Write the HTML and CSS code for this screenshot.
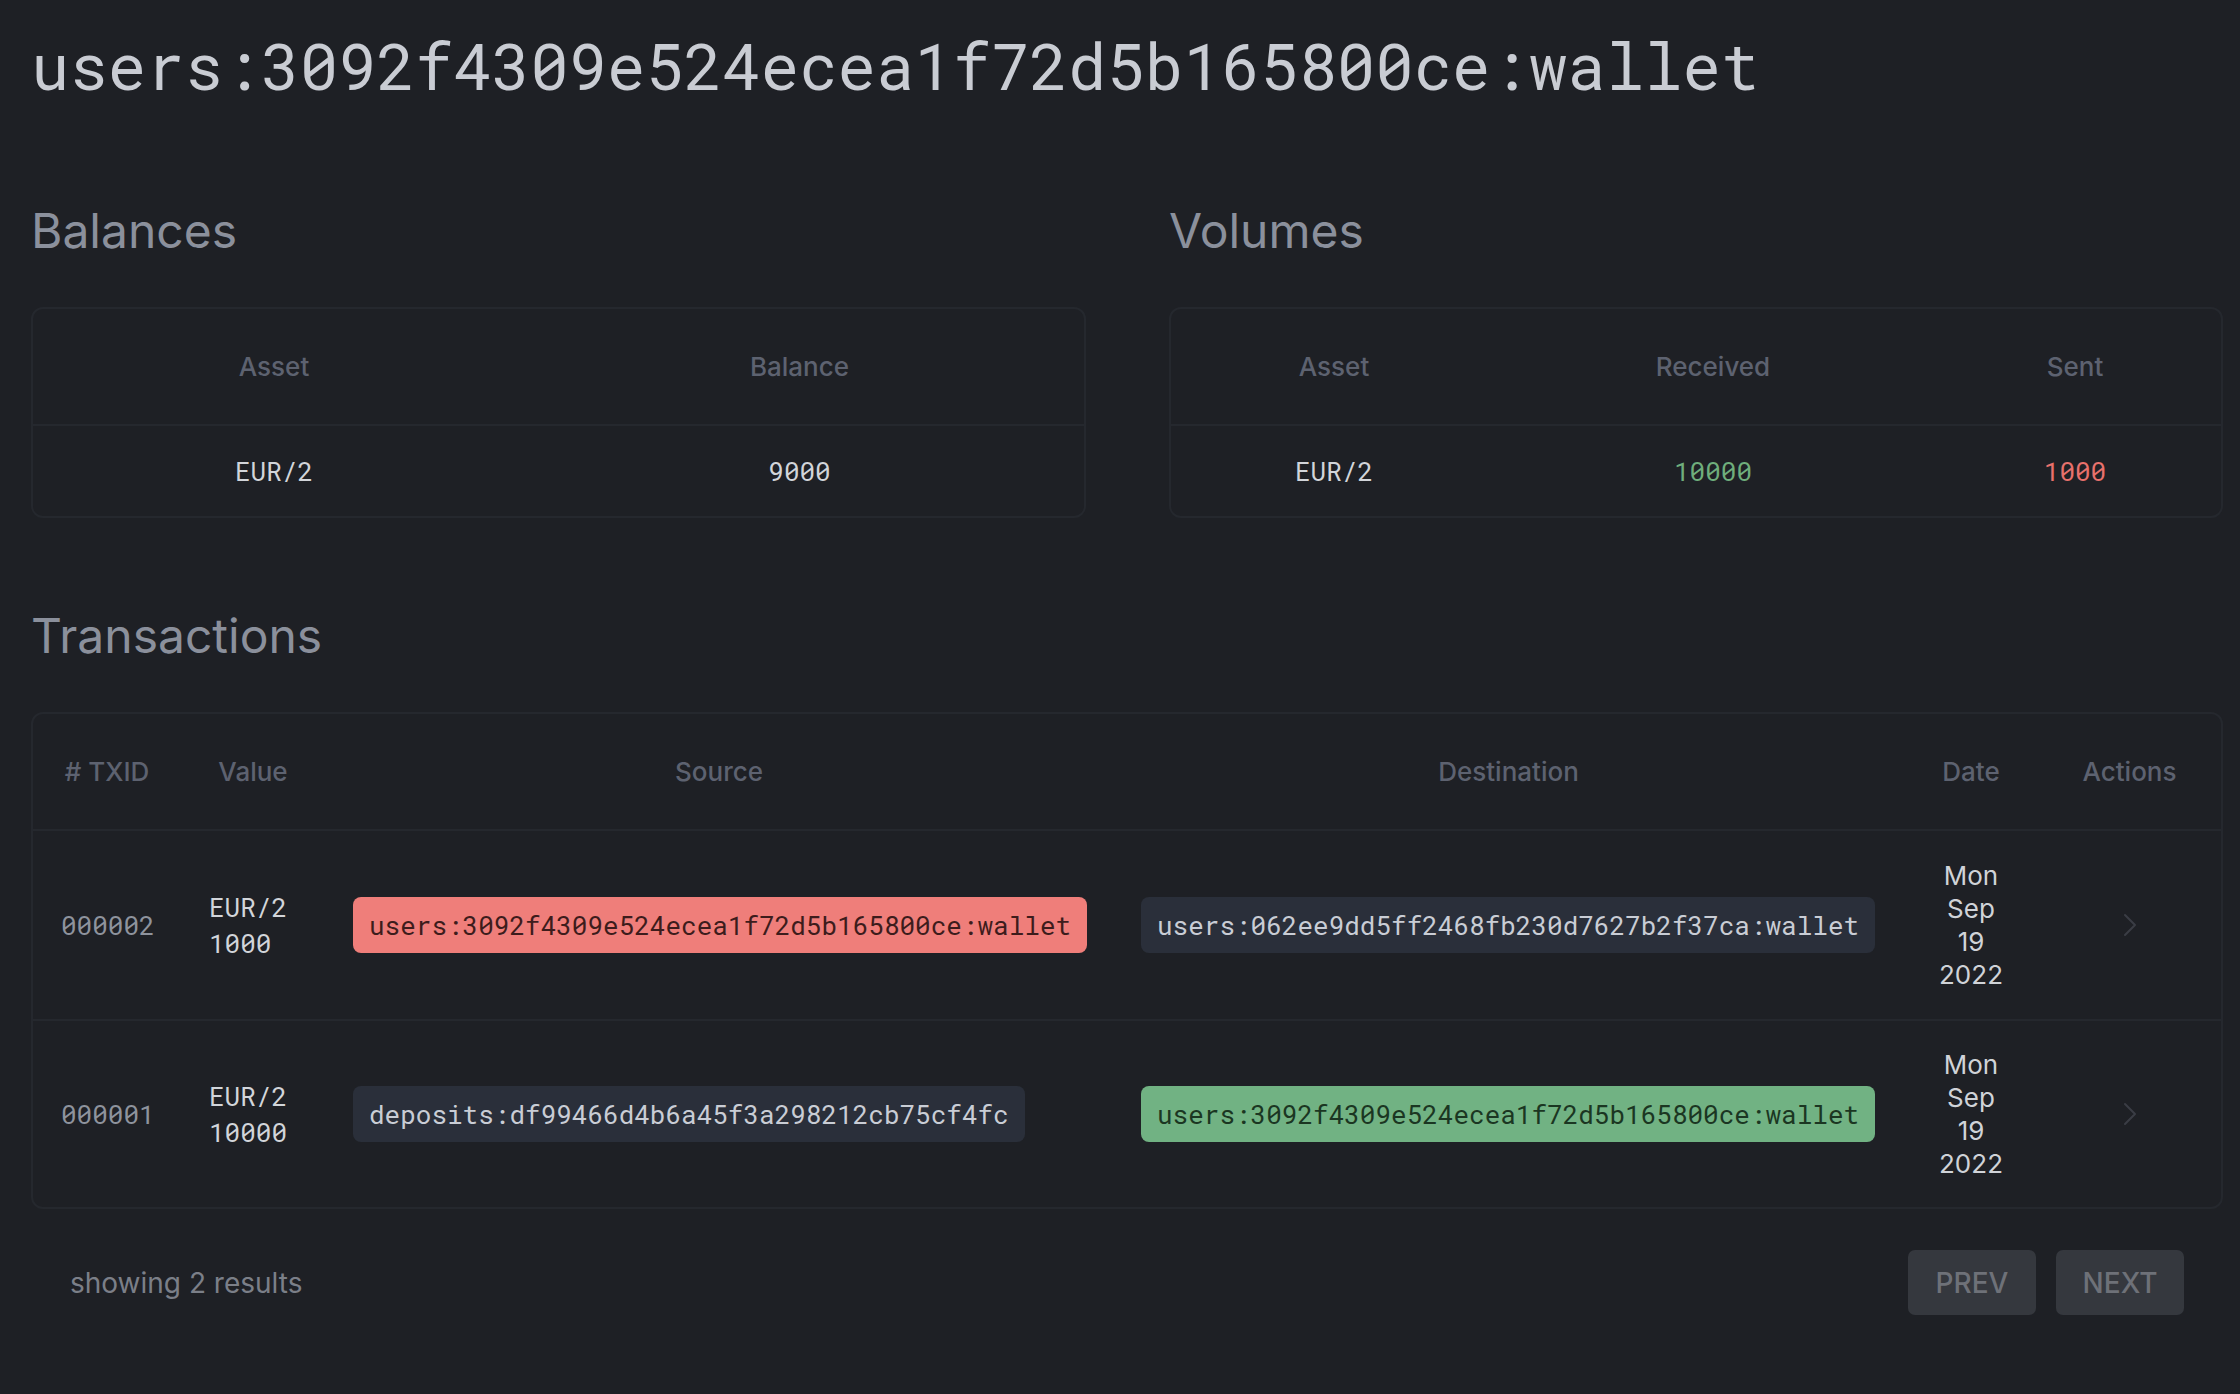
FILE: index.html
```html
<!DOCTYPE html>
<html lang="en">
<head>
<meta charset="utf-8">
<title>users:3092f4309e524ecea1f72d5b165800ce:wallet</title>
<link rel="stylesheet" href="styles.css">
</head>
<body>
<div class="page">
  <h1 class="title">users:3092f4309e524ecea1f72d5b165800ce:wallet</h1>

  <div class="summary">
    <section class="block">
      <h2 class="heading">Balances</h2>
      <div class="card">
        <div class="row head bal-cols">
          <div class="th">Asset</div>
          <div class="th">Balance</div>
        </div>
        <div class="row body bal-cols">
          <div class="td mono light">EUR/2</div>
          <div class="td mono light">9000</div>
        </div>
      </div>
    </section>

    <section class="block">
      <h2 class="heading">Volumes</h2>
      <div class="card">
        <div class="row head vol-cols">
          <div class="th">Asset</div>
          <div class="th">Received</div>
          <div class="th">Sent</div>
        </div>
        <div class="row body vol-cols">
          <div class="td mono light">EUR/2</div>
          <div class="td mono green">10000</div>
          <div class="td mono red">1000</div>
        </div>
      </div>
    </section>
  </div>

  <section class="block tx-block">
    <h2 class="heading">Transactions</h2>
    <div class="card">
      <div class="row head tx-cols">
        <div class="th"># TXID</div>
        <div class="th">Value</div>
        <div class="th">Source</div>
        <div class="th">Destination</div>
        <div class="th">Date</div>
        <div class="th">Actions</div>
      </div>

      <div class="row tx-row tx-cols">
        <div class="cell mono txid">000002</div>
        <div class="cell mono light value"><span>EUR/2</span><span>1000</span></div>
        <div class="cell"><span class="pill pill-red">users:3092f4309e524ecea1f72d5b165800ce:wallet</span></div>
        <div class="cell"><span class="pill pill-gray">users:062ee9dd5ff2468fb230d7627b2f37ca:wallet</span></div>
        <div class="cell date"><span class="date-text">Mon Sep 19 2022</span></div>
        <div class="cell action">
          <svg class="chev" width="14" height="24" viewBox="0 0 14 24"><path d="M2 2 L12 12 L2 22" fill="none" stroke="currentColor" stroke-width="2" stroke-linecap="round" stroke-linejoin="round"/></svg>
        </div>
      </div>

      <div class="row tx-row tx-cols">
        <div class="cell mono txid">000001</div>
        <div class="cell mono light value"><span>EUR/2</span><span>10000</span></div>
        <div class="cell"><span class="pill pill-gray">deposits:df99466d4b6a45f3a298212cb75cf4fc</span></div>
        <div class="cell"><span class="pill pill-green">users:3092f4309e524ecea1f72d5b165800ce:wallet</span></div>
        <div class="cell date"><span class="date-text">Mon Sep 19 2022</span></div>
        <div class="cell action">
          <svg class="chev" width="14" height="24" viewBox="0 0 14 24"><path d="M2 2 L12 12 L2 22" fill="none" stroke="currentColor" stroke-width="2" stroke-linecap="round" stroke-linejoin="round"/></svg>
        </div>
      </div>
    </div>

    <div class="footer">
      <span class="results">showing 2 results</span>
      <div class="pager">
        <button class="btn" type="button">PREV</button>
        <button class="btn" type="button">NEXT</button>
      </div>
    </div>
  </section>
</div>
</body>
</html>
```

FILE: styles.css
```css
html, body {
  margin: 0;
  padding: 0;
  background: #1e2025;
}

body {
  font-family: Inter, "Noto Sans", sans-serif;
  color: #d0d3d8;
}

.page {
  padding: 27px 17px 40px 31px;
}

.mono {
  font-family: "Roboto Mono", "Liberation Mono", "DejaVu Sans Mono", monospace;
}

.title {
  margin: 0;
  font-family: "Roboto Mono", "Liberation Mono", "DejaVu Sans Mono", monospace;
  font-size: 64px;
  line-height: 76px;
  font-weight: 400;
  color: #c9ccd3;
}

.summary {
  margin-top: 99px;
  display: grid;
  grid-template-columns: 1055px 1fr;
  column-gap: 83px;
}

.heading {
  margin: 0 0 47px 0;
  font-family: Inter, "Noto Sans", sans-serif;
  font-size: 48px;
  line-height: 58px;
  font-weight: 400;
  color: #8b909c;
}

.tx-block {
  margin-top: 89px;
}

.card {
  border: 2px solid #25282e;
  border-radius: 12px;
}

.row {
  display: grid;
  align-items: center;
}

.row.head {
  height: 115px;
  border-bottom: 2px solid #25282e;
}

.row.body {
  height: 90px;
}

.bal-cols {
  grid-template-columns: 482px 1fr;
}

.vol-cols {
  grid-template-columns: 326px 432px 1fr;
}

.tx-cols {
  grid-template-columns: 148px 144px 788px 791px 134px 1fr;
}

.th {
  text-align: center;
  font-size: 26px;
  line-height: 36px;
  font-weight: 500;
  color: #5d6270;
}

.td {
  text-align: center;
  font-size: 26px;
  line-height: 36px;
}

.light { color: #d2d5da; }
.green { color: #6fae7c; }
.red { color: #e8716c; }

.tx-row {
  height: 188px;
  border-bottom: 2px solid #25282e;
}

.tx-row:last-child {
  height: 186px;
  border-bottom: none;
}

.cell {
  padding: 0 28px;
  font-size: 26px;
  line-height: 36px;
}

.txid {
  color: #8e939d;
}

.value {
  display: flex;
  flex-direction: column;
}

.pill {
  display: inline-block;
  font-family: "Roboto Mono", "Liberation Mono", "DejaVu Sans Mono", monospace;
  font-size: 26px;
  line-height: 40px;
  padding: 8px 16px;
  border-radius: 8px;
  white-space: nowrap;
}

.pill-red {
  background: #ef7e7a;
  color: #3d1c1c;
}

.pill-green {
  background: #71b283;
  color: #1b3622;
}

.pill-gray {
  background: #2a2f3a;
  color: #c9cdd5;
}

.date {
  text-align: center;
  line-height: 33px;
  color: #d0d3d8;
}

.date-text {
  display: inline-block;
  width: min-content;
}

.action {
  display: flex;
  justify-content: center;
  align-items: center;
  padding: 0;
}

.chev {
  color: #3a3d45;
  display: block;
}

.footer {
  margin-top: 41px;
  padding: 0 39px;
  display: flex;
  justify-content: space-between;
  align-items: center;
}

.results {
  font-size: 28px;
  color: #7b7f88;
}

.pager {
  display: flex;
  gap: 20px;
}

.btn {
  width: 128px;
  height: 65px;
  border: none;
  border-radius: 7px;
  background: #35383e;
  color: #6e7178;
  font-family: Inter, "Noto Sans", sans-serif;
  font-size: 28px;
  font-weight: 500;
  padding: 0;
}
```
